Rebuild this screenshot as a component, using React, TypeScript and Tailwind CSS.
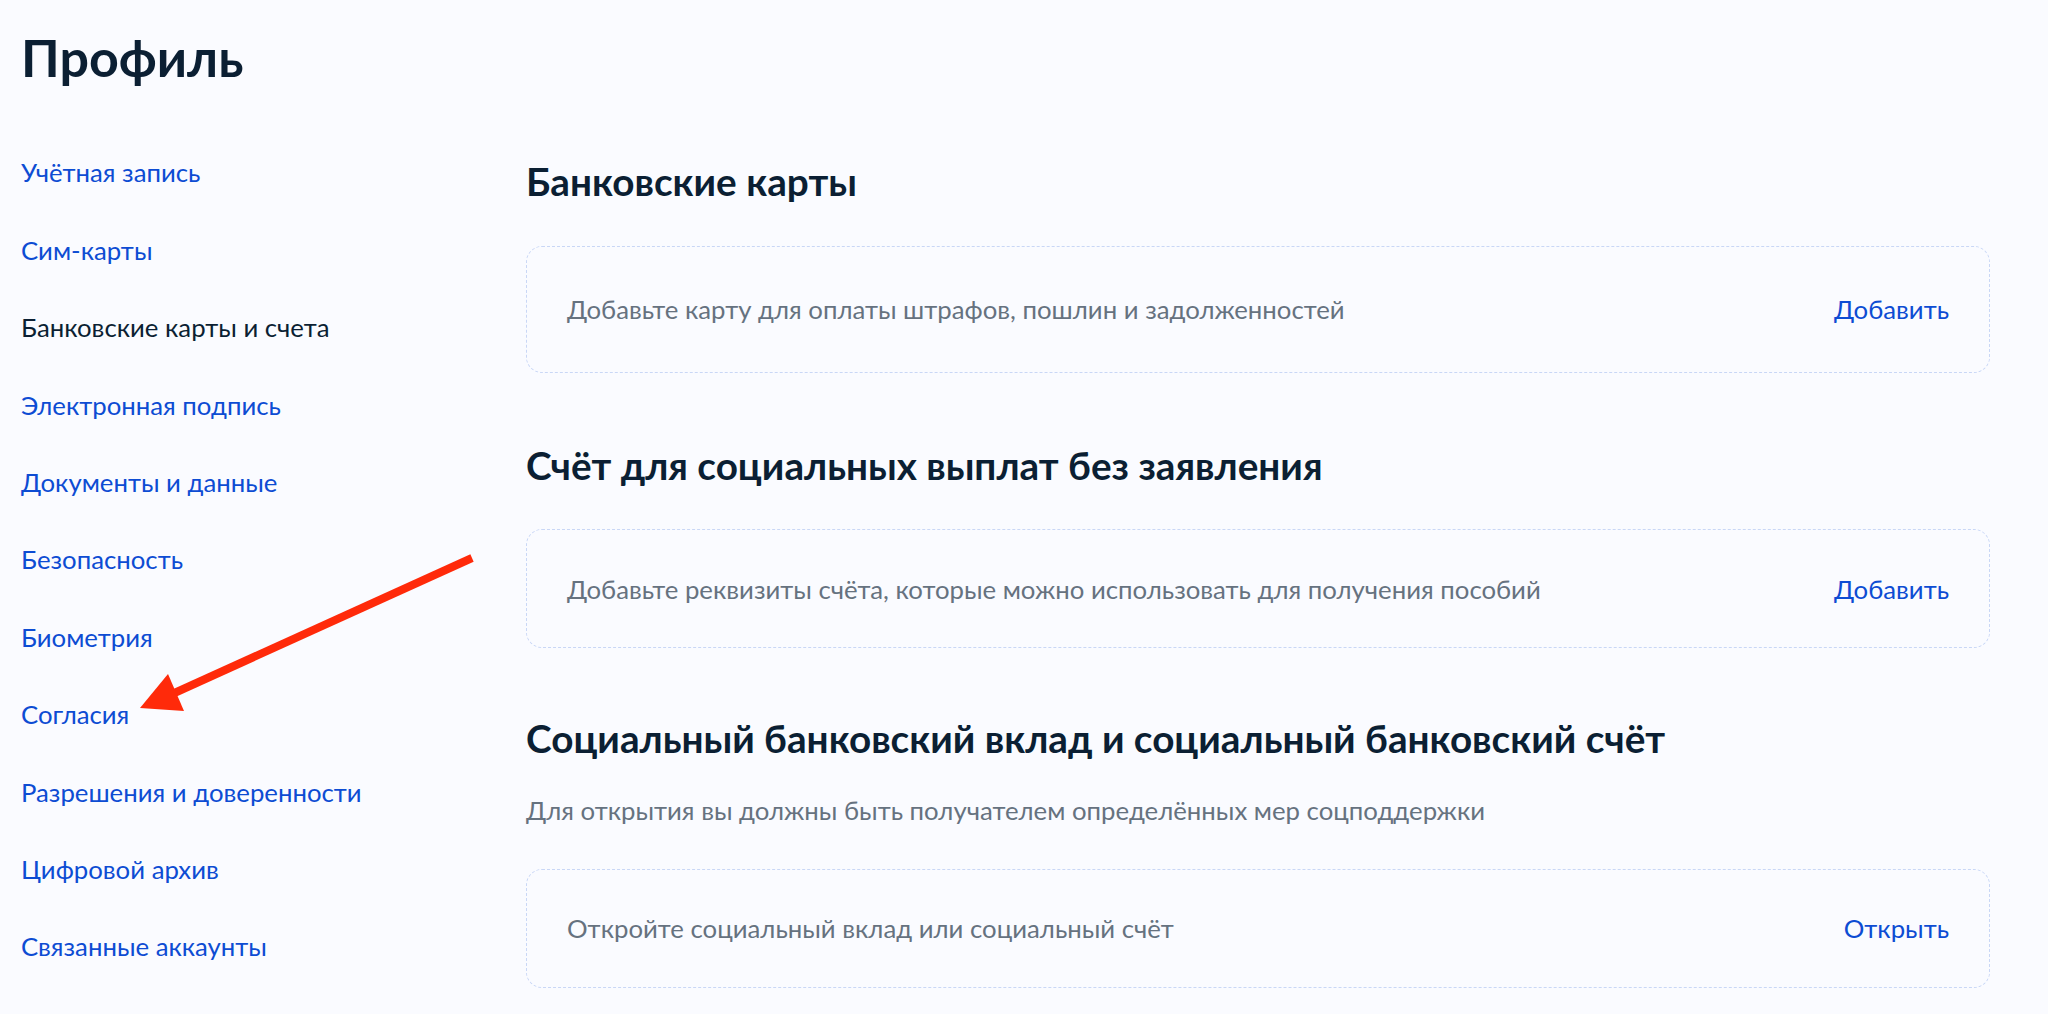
const navItems = [
  { label: "Учётная запись" },
  { label: "Сим-карты" },
  { label: "Банковские карты и счета", active: true },
  { label: "Электронная подпись" },
  { label: "Документы и данные" },
  { label: "Безопасность" },
  { label: "Биометрия" },
  { label: "Согласия" },
  { label: "Разрешения и доверенности" },
  { label: "Цифровой архив" },
  { label: "Связанные аккаунты" },
];

const EmptyCard = ({ text, action, tall }: { text: string; action: string; tall?: boolean }) => (
  <div
    className={`flex items-center justify-between rounded-[16px] border border-dashed border-[#C9D7F6] px-[40px] ${
      tall ? "h-[127px]" : "h-[119px]"
    }`}
  >
    <span className="text-[25.75px] leading-[36px] text-[#66727F]">{text}</span>
    <a href="#" className="text-[25.75px] leading-[36px] text-[#0D4CD3]">
      {action}
    </a>
  </div>
);

const App = () => {
  return (
    <div className="relative min-h-screen bg-[#FAFBFF] font-['Lato','Noto_Sans',sans-serif] text-[#0B1F33]">
      <div className="pl-[21px] pr-[58px]">
        <h1 className="pt-[26px] text-[52px] font-bold leading-[1.2]">Профиль</h1>

        <div className="mt-[46px] flex">
          <nav className="flex w-[505px] shrink-0 flex-col">
            {navItems.map((item) => (
              <a
                key={item.label}
                href="#"
                className={`text-[25.75px] leading-[77.4px] ${
                  item.active ? "text-[#0B1F33]" : "text-[#0D4CD3]"
                }`}
              >
                {item.label}
              </a>
            ))}
          </nav>

          <main className="flex-1 pt-[24px]">
            <section>
              <h2 className="text-[38.7px] font-bold leading-[1.2]">Банковские карты</h2>
              <div className="mt-[41px]">
                <EmptyCard
                  tall
                  text="Добавьте карту для оплаты штрафов, пошлин и задолженностей"
                  action="Добавить"
                />
              </div>
            </section>

            <section className="mt-[69px]">
              <h2 className="text-[38.7px] font-bold leading-[1.2]">
                Счёт для социальных выплат без заявления
              </h2>
              <div className="mt-[41px]">
                <EmptyCard
                  text="Добавьте реквизиты счёта, которые можно использовать для получения пособий"
                  action="Добавить"
                />
              </div>
            </section>

            <section className="mt-[67px]">
              <h2 className="text-[38.7px] font-bold leading-[1.2]">
                Социальный банковский вклад и социальный банковский счёт
              </h2>
              <p className="mt-[30px] text-[25.75px] leading-[36px] text-[#66727F]">
                Для открытия вы должны быть получателем определённых мер соцподдержки
              </p>
              <div className="mt-[41px]">
                <EmptyCard text="Откройте социальный вклад или социальный счёт" action="Открыть" />
              </div>
            </section>
          </main>
        </div>
      </div>

      {/* annotation arrow */}
      <svg
        className="pointer-events-none absolute left-0 top-0"
        width="2048"
        height="1014"
        viewBox="0 0 2048 1014"
      >
        <line x1="472" y1="558" x2="170" y2="695" stroke="#FF2A0A" strokeWidth="8" />
        <polygon points="140,708 168,674 184,711" fill="#FF2A0A" />
      </svg>
    </div>
  );
};

export default App;
